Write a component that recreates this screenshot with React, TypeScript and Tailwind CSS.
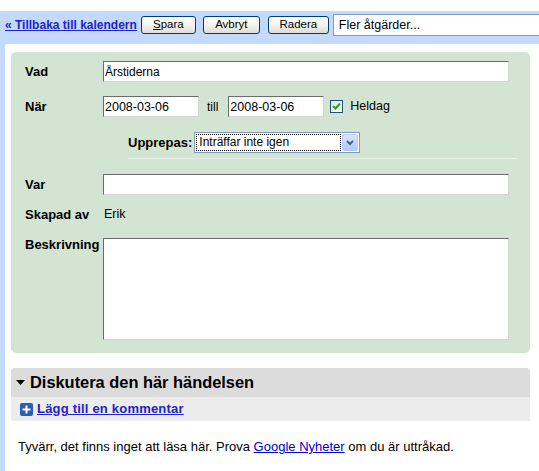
import React from 'react';

const font = "font-['Liberation_Sans',Arial,sans-serif]";

const XpButton: React.FC<{ label: React.ReactNode; width: string; className?: string }> = ({ label, width, className }) => (
  <button
    type="button"
    className={`${width} ${className ?? ''} shrink-0 h-[18px] rounded-[3px] border border-[#003c74] bg-linear-to-b from-white via-[#f5f4ef] to-[#dedcd2] text-[11.5px] leading-none text-black`}
  >
    {label}
  </button>
);

const fieldBorder =
  'border border-t-[#6b6b6b] border-l-[#6b6b6b] border-r-[#d4d4d4] border-b-[#d4d4d4] bg-white';

export default function App() {
  return (
    <div className={`w-[539px] h-[471px] overflow-hidden bg-white text-black ${font}`}>
      <div className="h-[11px] bg-white" />
      <div className="flex flex-col h-[460px] bg-[#c3d9ff] pl-[5px]">
        {/* Barra de ações */}
        <div className="flex items-center h-[33px] pt-[3px] pb-[8px] whitespace-nowrap overflow-hidden">
          <a href="#" className="shrink-0 text-[12px] font-bold text-[#2222cc] underline">
            « Tillbaka till kalendern
          </a>
          <XpButton
            width="w-[55px]"
            className="ml-[4px]"
            label={
              <>
                <span className="underline">S</span>para
              </>
            }
          />
          <XpButton width="w-[57px]" className="ml-[7px]" label="Avbryt" />
          <XpButton width="w-[61px]" className="ml-[8px]" label="Radera" />
          <div className="ml-[4px] h-[22px] w-[230px] shrink-0 border border-[#7f9db9] bg-white pl-[5px] text-[12.5px] leading-[20px]">
            Fler åtgärder...
          </div>
        </div>

        {/* Conteúdo */}
        <div className="flex-1 bg-white pl-[6px] pr-[9px] pt-[8px] rounded-tl-[2px]">
          <div className="rounded-[5px] bg-[#d3e5d2] pl-[14px] pt-[9px] pb-[13px]">
            {/* Vad */}
            <div className="flex items-center h-[21px]">
              <div className="w-[78px] text-[13px] font-bold">Vad</div>
              <input
                readOnly
                value="Årstiderna"
                className={`w-[406px] h-[21px] pl-[1px] text-[12px] outline-none ${fieldBorder}`}
              />
            </div>

            {/* När */}
            <div className="flex items-center h-[21px] mt-[14px]">
              <div className="w-[78px] text-[13px] font-bold">När</div>
              <input
                readOnly
                value="2008-03-06"
                className={`w-[96px] h-[21px] pl-[1px] text-[12.5px] outline-none ${fieldBorder}`}
              />
              <span className="ml-[8px] mr-[10px] text-[12px]">till</span>
              <input
                readOnly
                value="2008-03-06"
                className={`w-[96px] h-[21px] pl-[1px] text-[12.5px] outline-none ${fieldBorder}`}
              />
              <div className="ml-[6px] flex h-[13px] w-[13px] items-center justify-center border border-[#1c5180] bg-linear-to-br from-[#e4e4de] to-white">
                <svg width="9" height="9" viewBox="0 0 9 9">
                  <polyline points="1,4 3.5,6.5 8,1.5" fill="none" stroke="#21a121" strokeWidth="2" />
                </svg>
              </div>
              <span className="ml-[7px] text-[12.5px]">Heldag</span>
            </div>

            {/* Upprepas */}
            <div className="flex items-center h-[21px] mt-[15px] ml-[103px]">
              <span className="text-[13px] font-bold">Upprepas:</span>
              <div className="ml-[2px] flex h-[21px] w-[166px] items-center border border-[#7f9db9] bg-white pl-[1px] pr-[1px]">
                <div className="flex-1 h-[17px] border border-dotted border-black pl-[2px] text-[12px] leading-[15px]">
                  Inträffar inte igen
                </div>
                <div className="ml-[1px] flex h-[17px] w-[16px] items-center justify-center rounded-[2px] border border-[#b8cbf4] bg-linear-to-b from-[#dbe6fd] to-[#b3c7f5]">
                  <svg width="8" height="6" viewBox="0 0 8 6">
                    <polyline points="1,1 4,4 7,1" fill="none" stroke="#4d6185" strokeWidth="2" />
                  </svg>
                </div>
              </div>
            </div>
            <div className="ml-[103px] mt-[5px] h-px w-[389px] bg-[#e6f0e5]" />

            {/* Var */}
            <div className="flex items-center h-[21px] mt-[15px]">
              <div className="w-[78px] text-[13px] font-bold">Var</div>
              <input readOnly value="" className={`w-[406px] h-[21px] outline-none ${fieldBorder}`} />
            </div>

            {/* Skapad av */}
            <div className="flex items-center h-[21px] mt-[9px]">
              <div className="w-[79px] text-[13px] font-bold">Skapad av</div>
              <span className="text-[12.5px]">Erik</span>
            </div>

            {/* Beskrivning */}
            <div className="flex items-start mt-[13px]">
              <div className="w-[78px] text-[13px] font-bold leading-[14px]">Beskrivning</div>
              <textarea readOnly className={`w-[406px] h-[102px] resize-none outline-none ${fieldBorder}`} />
            </div>
          </div>

          {/* Diskussion */}
          <div className="mt-[15px]">
            <div className="flex items-center h-[29px] rounded-t-[4px] bg-[#dcdcdc] pl-[5px]">
              <svg width="9" height="5" viewBox="0 0 9 5">
                <polygon points="0,0 9,0 4.5,5" fill="#000" />
              </svg>
              <span className="ml-[5px] text-[16.4px] font-bold">Diskutera den här händelsen</span>
            </div>
            <div className="flex items-center h-[24px] bg-[#ececec] pl-[9px]">
              <svg width="13" height="13" viewBox="0 0 13 13">
                <rect x="0" y="0" width="13" height="13" rx="2" fill="#2a5db0" />
                <rect x="5.5" y="2.5" width="2" height="8" fill="#fff" />
                <rect x="2.5" y="5.5" width="8" height="2" fill="#fff" />
              </svg>
              <a href="#" className="ml-[4px] text-[13px] font-bold tracking-[0.2px] text-[#2222cc] underline">
                Lägg till en kommentar
              </a>
            </div>
          </div>

          <p className="mt-[18px] pl-[7px] text-[13px] leading-[15px] whitespace-nowrap">
            Tyvärr, det finns inget att läsa här. Prova{' '}
            <a href="#" className="text-[#0000cc] underline">
              Google Nyheter
            </a>{' '}
            om du är uttråkad.
          </p>
        </div>
      </div>
    </div>
  );
}
